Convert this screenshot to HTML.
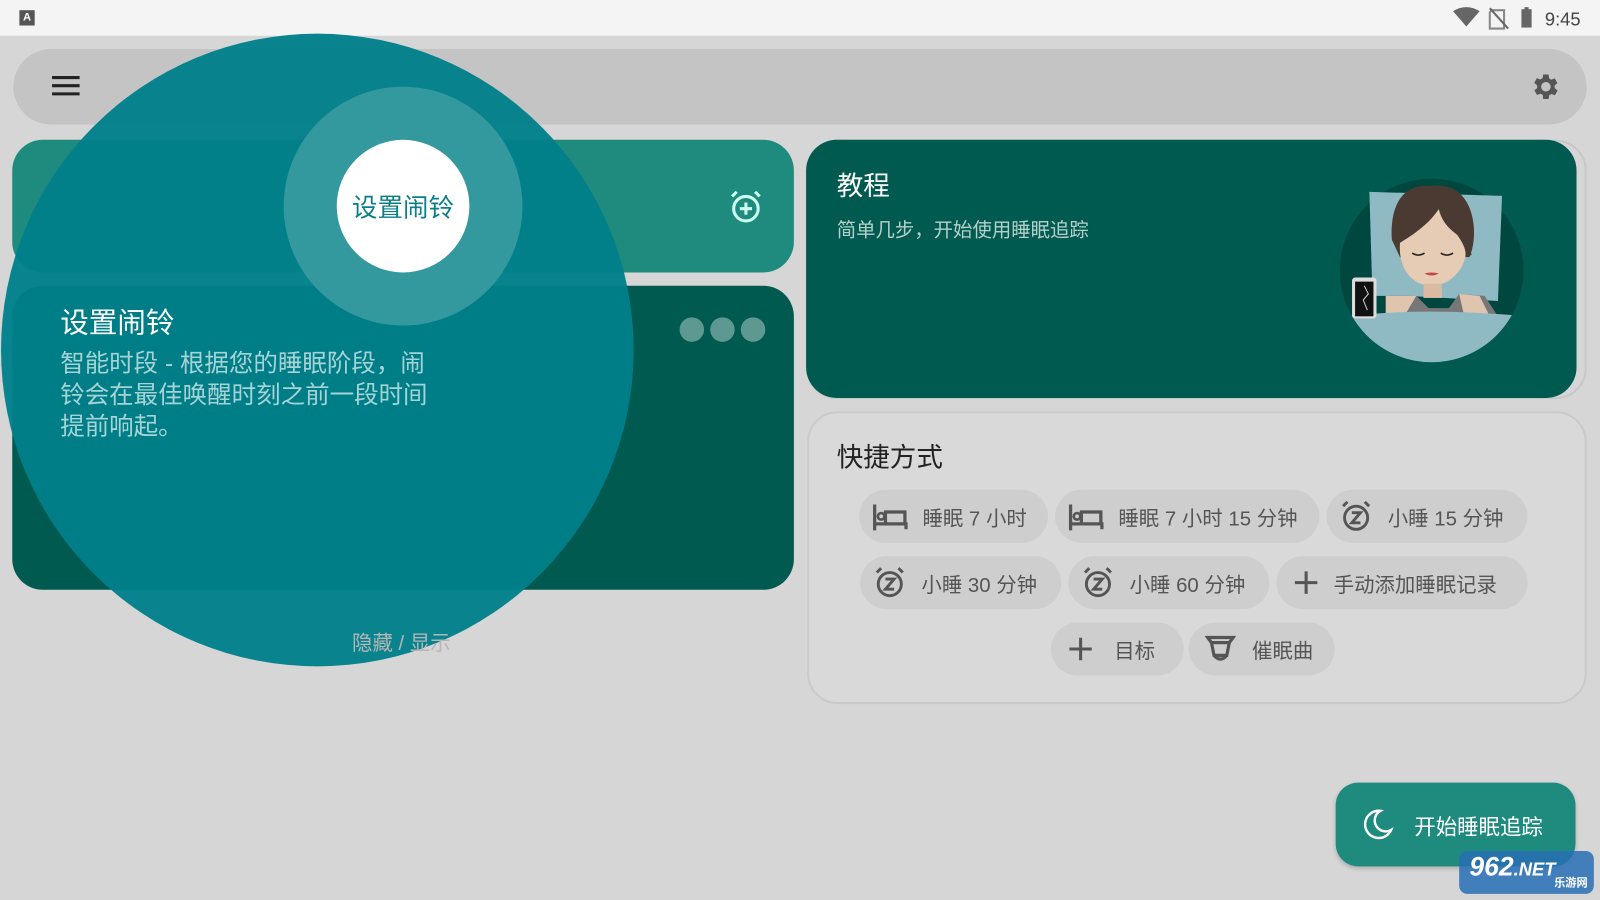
<!DOCTYPE html>
<html><head><meta charset="utf-8"><style>
*{margin:0;padding:0;box-sizing:border-box}
body{width:1600px;height:900px;overflow:hidden;background:#d6d6d6;font-family:"Liberation Sans","Noto Sans CJK SC",sans-serif;position:relative}
#w{position:absolute;left:0;top:0;width:1568px;height:882px;transform:scale(1.0204);transform-origin:0 0}
.abs{position:absolute}
.chip{position:absolute;height:52px;border-radius:26px;background:#cecece;color:#555;font-size:20px;display:flex;align-items:center;padding-left:12px;gap:14px;white-space:nowrap}
.chip svg{flex:none}
</style></head><body><div id="w">
<div class="abs" style="left:0;top:0;width:1568px;height:35px;background:#f4f4f4"></div>
<div class="abs" style="left:19px;top:10px;width:15px;height:15px;background:#555;color:#fff;font-size:11px;font-weight:bold;text-align:center;line-height:15px">A</div>
<svg class="abs" style="left:1420px;top:6px" width="150" height="24"><path d="M4 5 Q17 -3 30 5 L17 20Z" fill="#666"/><path d="M42 4h12v18h-14V6z" fill="none" stroke="#888" stroke-width="2"/><path d="M40 2 L58 22" stroke="#666" stroke-width="2"/><rect x="71" y="3" width="10" height="18" fill="#666"/><rect x="74" y="1" width="4" height="3" fill="#666"/><text x="94" y="19" font-size="18" fill="#444" font-family="Liberation Sans">9:45</text></svg>

<div class="abs" style="left:13px;top:48px;width:1542px;height:74px;border-radius:37px;background:#c4c4c4"></div>
<svg class="abs" style="left:50px;top:73px" width="30" height="24"><path d="M1 3h27M1 11h27M1 19h27" stroke="#222" stroke-width="3"/></svg>
<svg class="abs" style="left:1499px;top:69px" width="32" height="32" viewBox="0 0 24 24"><path fill="#555" d="M19.4 13a7.5 7.5 0 0 0 0-2l2.1-1.6-2-3.5-2.5 1a7 7 0 0 0-1.7-1L15 3h-4l-.4 2.7a7 7 0 0 0-1.7 1l-2.5-1-2 3.5L6.6 11a7.5 7.5 0 0 0 0 2l-2.1 1.6 2 3.5 2.5-1a7 7 0 0 0 1.7 1L11 21h4l.4-2.7a7 7 0 0 0 1.7-1l2.5 1 2-3.5zM13 15.5A3.5 3.5 0 1 1 13 8.5a3.5 3.5 0 0 1 0 7z" transform="translate(-1 0)"/></svg>

<div class="abs" style="left:12px;top:137px;width:766px;height:130px;border-radius:30px;background:#1f8a7e"></div>
<svg class="abs" style="left:713px;top:185px" width="36" height="36" viewBox="0 0 24 24"><circle cx="12" cy="13" r="8" fill="none" stroke="#cfe" stroke-width="2"/><path d="M12 9v8M8 13h8M3 5l3-3M21 5l-3-3" stroke="#cfe" stroke-width="2"/></svg>
<div class="abs" style="left:12px;top:280px;width:766px;height:298px;border-radius:30px;background:#005a4f"></div>
<div class="abs" style="left:666px;top:311px;width:84px;height:24px;display:flex;gap:6px"><i style="width:24px;height:24px;border-radius:50%;background:#5e9991"></i><i style="width:24px;height:24px;border-radius:50%;background:#5e9991"></i><i style="width:24px;height:24px;border-radius:50%;background:#5e9991"></i></div>

<div class="abs" style="left:790px;top:137px;width:765px;height:254px;border-radius:30px;border:2px solid #c8c8c8"></div>
<div class="abs" style="left:790px;top:137px;width:755px;height:253px;border-radius:30px;background:#005a4f"></div>
<div class="abs" style="left:820px;top:162px;color:#fff;font-size:26px">教程</div>
<div class="abs" style="left:820px;top:211px;color:#b5d0cc;font-size:19px">简单几步，开始使用睡眠追踪</div>
<svg class="abs" style="left:1300px;top:150px" width="260" height="220">
<defs><clipPath id="cc"><circle cx="103" cy="115" r="90"/></clipPath></defs>
<circle cx="103" cy="115" r="90" fill="#00473f"/>
<path d="M42 38 L172 42 L168 145 L80 140 L45 140Z" fill="#8fbac4"/>
<path d="M98 32 C72 32 62 55 64 85 L72 102 L140 102 C150 80 145 32 110 32Z" fill="#4a3a32"/>
<path d="M110 55 C115 75 130 80 138 88 C138 115 120 130 103 130 C85 130 70 115 72 88 C85 80 100 70 110 55Z" fill="#e6cbb5"/>
<path d="M115 60 C120 75 132 80 140 88 L142 100 L136 102 C138 90 128 82 115 60Z" fill="#4a3a32"/>
<path d="M84 98 q6 4 12 0M112 98 q6 4 12 0" stroke="#222" stroke-width="1.5" fill="none"/>
<path d="M96 118 q7 4 14 0 q-7 -2 -14 0" fill="#c24a4a"/>
<rect x="95" y="128" width="18" height="14" fill="#d9bba4"/>
<path d="M88 140 L100 152 L120 152 L130 138 L155 140 L168 160 L58 160 L62 140Z" fill="#777"/>
<path d="M58 140 L88 140 L76 160 L58 160ZM130 138 L150 140 L160 160 L135 160Z" fill="#e0c5ae"/>
<g clip-path="url(#cc)"><path d="M20 160 Q103 150 215 162 L215 230 L20 230Z" fill="#8fbac4"/></g>
<rect x="25" y="122" width="24" height="40" rx="3" fill="#ddd"/><rect x="28" y="126" width="18" height="34" fill="#111"/><path d="M37 130 l4 8 -5 6 4 10" stroke="#ccc" fill="none"/>
</svg>

<div class="abs" style="left:791px;top:403px;width:764px;height:287px;border-radius:30px;border:2px solid #cacaca;background:#d9d9d9"></div>
<div class="abs" style="left:820px;top:428px;color:#222;font-size:26px">快捷方式</div>

<div class="chip" style="left:842px;top:480px;width:185px"><svg width="36" height="28" viewBox="0 0 34 26"><path d="M3 2v24M3 20h29v5M31 20v-11h-18v11" stroke="#555" stroke-width="3" fill="none"/><circle cx="9" cy="13" r="3" fill="none" stroke="#555" stroke-width="2.5"/></svg>睡眠 7 小时</div>
<div class="chip" style="left:1034px;top:480px;width:259px"><svg width="36" height="28" viewBox="0 0 34 26"><path d="M3 2v24M3 20h29v5M31 20v-11h-18v11" stroke="#555" stroke-width="3" fill="none"/><circle cx="9" cy="13" r="3" fill="none" stroke="#555" stroke-width="2.5"/></svg>睡眠 7 小时 15 分钟</div>
<div class="chip" style="left:1300px;top:480px;width:197px"><svg width="34" height="34" viewBox="0 0 24 24"><circle cx="12" cy="13" r="8" fill="none" stroke="#555" stroke-width="2"/><path d="M9 9.5h6l-6 7h6M3 5l3-3M21 5l-3-3" stroke="#555" stroke-width="2" fill="none"/></svg>小睡 15 分钟</div>
<div class="chip" style="left:843px;top:545px;width:197px"><svg width="34" height="34" viewBox="0 0 24 24"><circle cx="12" cy="13" r="8" fill="none" stroke="#555" stroke-width="2"/><path d="M9 9.5h6l-6 7h6M3 5l3-3M21 5l-3-3" stroke="#555" stroke-width="2" fill="none"/></svg>小睡 30 分钟</div>
<div class="chip" style="left:1047px;top:545px;width:197px"><svg width="34" height="34" viewBox="0 0 24 24"><circle cx="12" cy="13" r="8" fill="none" stroke="#555" stroke-width="2"/><path d="M9 9.5h6l-6 7h6M3 5l3-3M21 5l-3-3" stroke="#555" stroke-width="2" fill="none"/></svg>小睡 60 分钟</div>
<div class="chip" style="left:1251px;top:545px;width:246px;padding-left:16px"><svg width="26" height="26"><path d="M13 2v22M2 13h22" stroke="#555" stroke-width="3"/></svg>手动添加睡眠记录</div>
<div class="chip" style="left:1030px;top:610px;width:130px;padding-left:16px;gap:20px"><svg width="26" height="26"><path d="M13 2v22M2 13h22" stroke="#555" stroke-width="3"/></svg>目标</div>
<div class="chip" style="left:1165px;top:610px;width:143px;padding-left:16px;gap:16px"><svg width="30" height="30" viewBox="0 0 24 24"><path d="M2 3h20l-3 4H5zM5 7l2 10h10l2-10M7 17q5 6 10 0" stroke="#555" stroke-width="2.5" fill="none"/></svg>催眠曲</div>

<div class="abs" style="left:1309px;top:767px;width:235px;height:82px;border-radius:22px;background:#1f8a7e;box-shadow:0 2px 4px rgba(0,0,0,.2)"></div>
<svg class="abs" style="left:1334px;top:792px" width="32" height="32" viewBox="0 0 24 24"><path d="M14 2a10 10 0 1 0 8 14A8 8 0 0 1 14 2z" fill="none" stroke="#fff" stroke-width="1.8"/></svg>
<div class="abs" style="left:1386px;top:795px;color:#fff;font-size:21px">开始睡眠追踪</div>
<div class="abs" style="left:1430px;top:834px;width:132px;height:42px;border-radius:8px;background:rgba(40,110,180,.85);color:#fff;font-weight:bold;font-size:26px;font-style:italic;padding-left:10px;line-height:30px">962<span style="font-size:18px">.NET</span><div style="font-size:11px;position:absolute;right:6px;top:26px;line-height:12px;font-style:normal">乐游网</div></div>

<!-- overlay -->
<div class="abs" style="left:1px;top:33px;width:620px;height:620px;border-radius:50%;background:rgba(0,128,138,0.96)"></div>
<div class="abs" style="left:278px;top:85px;width:234px;height:234px;border-radius:50%;background:#33999f"></div>
<div class="abs" style="left:330px;top:137px;width:130px;height:130px;border-radius:50%;background:#fff;color:#0a7f88;font-size:25px;display:flex;align-items:center;justify-content:center">设置闹铃</div>
<div class="abs" style="left:59px;top:295px;color:#fff;font-size:28px">设置闹铃</div>
<div class="abs" style="left:59px;top:341px;width:366px;color:#a5d3d6;font-size:24px;line-height:31px">智能时段 - 根据您的睡眠阶段，闹铃会在最佳唤醒时刻之前一段时间提前响起。</div>
<div class="abs" style="left:345px;top:614px;color:#b6b6b6;font-size:20px">隐藏 / 显示</div>
</div></body></html>
